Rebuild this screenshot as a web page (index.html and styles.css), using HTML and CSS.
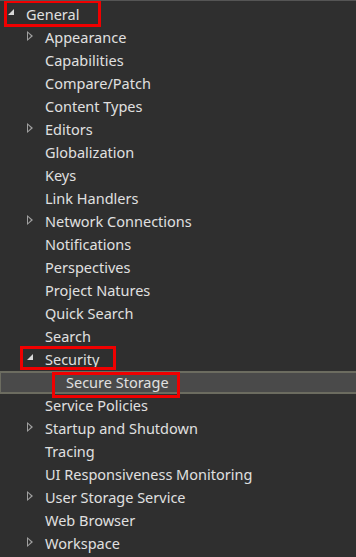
FILE: index.html
```html
<!DOCTYPE html>
<html lang="en">
  <head>
    <meta charset="UTF-8" />
    <title>Preferences</title>
    <link rel="stylesheet" href="styles.css">
  </head>
  <body>
    <ul class="tree">
      <li class="row open lvl1 marked mark-general"><span class="twist"></span><span class="label">General</span></li>
      <li class="row closed lvl2"><span class="twist"></span><span class="label">Appearance</span></li>
      <li class="row lvl2"><span class="twist"></span><span class="label">Capabilities</span></li>
      <li class="row lvl2"><span class="twist"></span><span class="label">Compare/Patch</span></li>
      <li class="row lvl2"><span class="twist"></span><span class="label">Content Types</span></li>
      <li class="row closed lvl2"><span class="twist"></span><span class="label">Editors</span></li>
      <li class="row lvl2"><span class="twist"></span><span class="label">Globalization</span></li>
      <li class="row lvl2"><span class="twist"></span><span class="label">Keys</span></li>
      <li class="row lvl2"><span class="twist"></span><span class="label">Link Handlers</span></li>
      <li class="row closed lvl2"><span class="twist"></span><span class="label">Network Connections</span></li>
      <li class="row lvl2"><span class="twist"></span><span class="label">Notifications</span></li>
      <li class="row lvl2"><span class="twist"></span><span class="label">Perspectives</span></li>
      <li class="row lvl2"><span class="twist"></span><span class="label">Project Natures</span></li>
      <li class="row lvl2"><span class="twist"></span><span class="label">Quick Search</span></li>
      <li class="row lvl2"><span class="twist"></span><span class="label">Search</span></li>
      <li class="row open lvl2 marked mark-security"><span class="twist"></span><span class="label">Security</span></li>
      <li class="row lvl3 selected marked mark-storage"><span class="twist"></span><span class="label">Secure Storage</span></li>
      <li class="row lvl2"><span class="twist"></span><span class="label">Service Policies</span></li>
      <li class="row closed lvl2"><span class="twist"></span><span class="label">Startup and Shutdown</span></li>
      <li class="row lvl2"><span class="twist"></span><span class="label">Tracing</span></li>
      <li class="row lvl2"><span class="twist"></span><span class="label">UI Responsiveness Monitoring</span></li>
      <li class="row closed lvl2"><span class="twist"></span><span class="label">User Storage Service</span></li>
      <li class="row lvl2"><span class="twist"></span><span class="label">Web Browser</span></li>
      <li class="row closed lvl2"><span class="twist"></span><span class="label">Workspace</span></li>
    </ul>
  </body>
</html>
```

FILE: styles.css
```css
body {
  margin: 0;
  background: #2f2f2f;
  font-family: "Noto Sans", "Open Sans", sans-serif;
  font-size: 14.5px;
  color: #e0e0e0;
  height: 557px;
  overflow: hidden;
  border-top: 1px solid #555;
  box-sizing: border-box;
}

.tree {
  list-style: none;
  margin: 0;
  padding: 2px 0 0 0;
}

.row {
  position: relative;
  display: flex;
  align-items: center;
  height: 23px;
  white-space: nowrap;
}

.lvl1 {
  padding-left: 6px;
}

.lvl2 {
  padding-left: 25px;
}

.lvl3 {
  padding-left: 45px;
}

.twist {
  width: 10px;
  height: 12px;
  margin-right: 10px;
  position: relative;
}

.label {
  line-height: 23px;
}

/* collapsed: outlined triangle pointing right */
.closed .twist::before {
  content: "";
  position: absolute;
  left: 2px;
  top: -1px;
  width: 0;
  height: 0;
  border-top: 5px solid transparent;
  border-bottom: 5px solid transparent;
  border-left: 6px solid #a0a0a0;
}

.closed .twist::after {
  content: "";
  position: absolute;
  left: 3px;
  top: 1px;
  width: 0;
  height: 0;
  border-top: 3px solid transparent;
  border-bottom: 3px solid transparent;
  border-left: 3px solid #2f2f2f;
}

/* expanded: filled corner triangle */
.open .twist::before {
  content: "";
  position: absolute;
  left: 2px;
  top: 0;
  width: 0;
  height: 0;
  border-left: 6px solid transparent;
  border-bottom: 6px solid #d8d8d8;
}

.selected {
  background: #4a4a4a;
  border-top: 2px solid #6c6c60;
  border-bottom: 2px solid #6c6c60;
  border-left: 1px solid #6c6c60;
  height: 19px;
}

.marked::after {
  content: "";
  position: absolute;
  border: 3px solid #f00000;
}

.mark-general::after {
  left: 4px;
  top: -3px;
  width: 91px;
  height: 21px;
}

.mark-security::after {
  left: 20px;
  top: -2px;
  width: 90px;
  height: 18px;
}

.mark-storage::after {
  left: 51px;
  top: -1px;
  width: 122px;
  height: 20px;
}
```
